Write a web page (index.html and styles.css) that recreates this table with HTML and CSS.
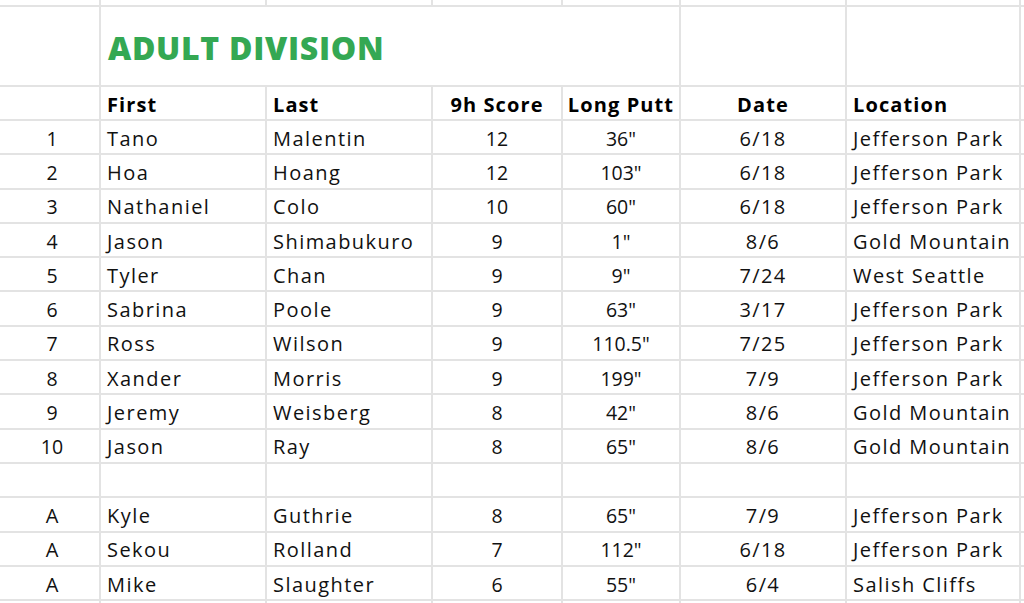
FILE: index.html
```html
<!DOCTYPE html>
<html>
<head>
<meta charset="utf-8">
<link rel="stylesheet" href="styles.css">
</head>
<body>
<div class="sheet">
  <div class="c"></div><div class="c"></div><div class="c"></div><div class="c"></div><div class="c"></div><div class="c"></div><div class="c"></div><div class="c"></div><div class="c"></div>

  <div class="c"></div><div class="c"></div>
  <div class="c title">ADULT DIVISION</div>
  <div class="c"></div><div class="c"></div><div class="c"></div>

  <div class="c"></div><div class="c"></div>
  <div class="c h">First</div><div class="c h">Last</div><div class="c h ctr">9h Score</div><div class="c h ctr">Long Putt</div><div class="c h ctr">Date</div><div class="c h">Location</div>
  <div class="c"></div>

  <div class="c"></div><div class="c n">1</div><div class="c t">Tano</div><div class="c t">Malentin</div><div class="c n">12</div><div class="c n">36"</div><div class="c d">6/18</div><div class="c t">Jefferson Park</div><div class="c"></div>
  <div class="c"></div><div class="c n">2</div><div class="c t">Hoa</div><div class="c t">Hoang</div><div class="c n">12</div><div class="c n">103"</div><div class="c d">6/18</div><div class="c t">Jefferson Park</div><div class="c"></div>
  <div class="c"></div><div class="c n">3</div><div class="c t">Nathaniel</div><div class="c t">Colo</div><div class="c n">10</div><div class="c n">60"</div><div class="c d">6/18</div><div class="c t">Jefferson Park</div><div class="c"></div>
  <div class="c"></div><div class="c n">4</div><div class="c t">Jason</div><div class="c t">Shimabukuro</div><div class="c n">9</div><div class="c n">1"</div><div class="c d">8/6</div><div class="c t">Gold Mountain</div><div class="c"></div>
  <div class="c"></div><div class="c n">5</div><div class="c t">Tyler</div><div class="c t">Chan</div><div class="c n">9</div><div class="c n">9"</div><div class="c d">7/24</div><div class="c t">West Seattle</div><div class="c"></div>
  <div class="c"></div><div class="c n">6</div><div class="c t">Sabrina</div><div class="c t">Poole</div><div class="c n">9</div><div class="c n">63"</div><div class="c d">3/17</div><div class="c t">Jefferson Park</div><div class="c"></div>
  <div class="c"></div><div class="c n">7</div><div class="c t">Ross</div><div class="c t">Wilson</div><div class="c n">9</div><div class="c n">110.5"</div><div class="c d">7/25</div><div class="c t">Jefferson Park</div><div class="c"></div>
  <div class="c"></div><div class="c n">8</div><div class="c t">Xander</div><div class="c t">Morris</div><div class="c n">9</div><div class="c n">199"</div><div class="c d">7/9</div><div class="c t">Jefferson Park</div><div class="c"></div>
  <div class="c"></div><div class="c n">9</div><div class="c t">Jeremy</div><div class="c t">Weisberg</div><div class="c n">8</div><div class="c n">42"</div><div class="c d">8/6</div><div class="c t">Gold Mountain</div><div class="c"></div>
  <div class="c"></div><div class="c n">10</div><div class="c t">Jason</div><div class="c t">Ray</div><div class="c n">8</div><div class="c n">65"</div><div class="c d">8/6</div><div class="c t">Gold Mountain</div><div class="c"></div>

  <div class="c"></div><div class="c"></div><div class="c"></div><div class="c"></div><div class="c"></div><div class="c"></div><div class="c"></div><div class="c"></div><div class="c"></div>

  <div class="c"></div><div class="c n a">A</div><div class="c t">Kyle</div><div class="c t">Guthrie</div><div class="c n">8</div><div class="c n">65"</div><div class="c d">7/9</div><div class="c t">Jefferson Park</div><div class="c"></div>
  <div class="c"></div><div class="c n a">A</div><div class="c t">Sekou</div><div class="c t">Rolland</div><div class="c n">7</div><div class="c n">112"</div><div class="c d">6/18</div><div class="c t">Jefferson Park</div><div class="c"></div>
  <div class="c"></div><div class="c n a">A</div><div class="c t">Mike</div><div class="c t">Slaughter</div><div class="c n">6</div><div class="c n">55"</div><div class="c d">6/4</div><div class="c t">Salish Cliffs</div><div class="c"></div>

  <div class="c"></div><div class="c"></div><div class="c"></div><div class="c"></div><div class="c"></div><div class="c"></div><div class="c"></div><div class="c"></div><div class="c"></div>
</div>
</body>
</html>
```

FILE: styles.css
```css
html, body {
  margin: 0;
  padding: 0;
  background: #ffffff;
  overflow: hidden;
}

.sheet {
  width: 1024px;
  height: 603px;
  overflow: hidden;
  display: grid;
  grid-template-columns: 3px 94px 164px 164px 128px 116px 164px 172px 1fr;
  grid-template-rows: 5px 78px 32px repeat(14, 32.3px) 10px;
  gap: 2px;
  background: #e3e3e3;
  font-family: "Open Sans", sans-serif;
  font-size: 20px;
  color: #111;
}

.c {
  background: #fff;
  display: flex;
  align-items: center;
  padding: 2px 0 0 6px;
  white-space: nowrap;
  overflow: visible;
  min-width: 0;
}

.t {
  letter-spacing: 1.45px;
}

.n {
  justify-content: center;
  padding-left: 0;
  font-size: 19.5px;
}

.n.a {
  font-size: 20px;
}

.d {
  justify-content: center;
  padding-left: 0;
  letter-spacing: 1.4px;
}

.ctr {
  justify-content: center;
  padding-left: 0;
}

.h {
  font-weight: 700;
  letter-spacing: 1.1px;
  color: #000;
}

.title {
  grid-column: span 4;
  color: #34a853;
  font-weight: 800;
  font-size: 32px;
  letter-spacing: 0.7px;
  padding-left: 7px;
}
```
